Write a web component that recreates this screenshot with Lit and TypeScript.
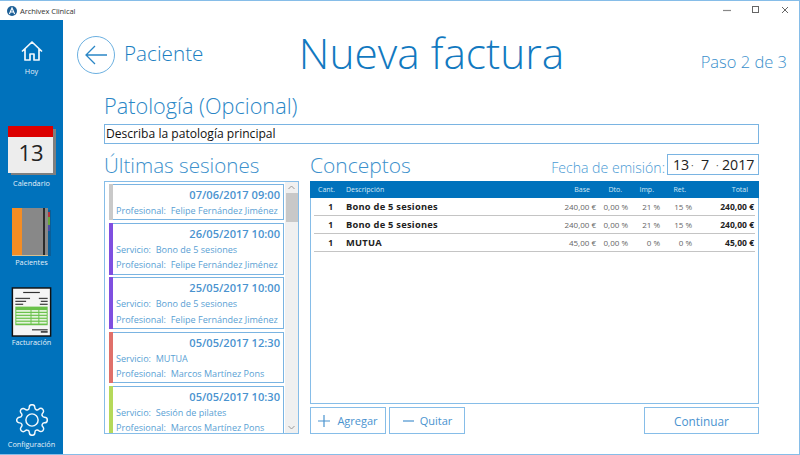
import { LitElement, html, css, svg } from "lit";
import { customElement } from "lit/decorators.js";

const sessions = [
  { c: "#c9c9c9", d: "07/06/2017 09:00", s: "", p: "Felipe Fernández Jiménez" },
  { c: "#7f4fe0", d: "26/05/2017 10:00", s: "Bono de 5 sesiones", p: "Felipe Fernández Jiménez" },
  { c: "#7f4fe0", d: "25/05/2017 10:00", s: "Bono de 5 sesiones", p: "Felipe Fernández Jiménez" },
  { c: "#e0706a", d: "05/05/2017 12:30", s: "MUTUA", p: "Marcos Martínez Pons" },
  { c: "#b5d95a", d: "05/05/2017 10:30", s: "Sesión de pilates", p: "Marcos Martínez Pons" },
];
const rows = [
  ["1", "Bono de 5 sesiones", "240,00 €", "0,00 %", "21 %", "15 %", "240,00 €"],
  ["1", "Bono de 5 sesiones", "240,00 €", "0,00 %", "21 %", "15 %", "240,00 €"],
  ["1", "MUTUA", "45,00 €", "0,00 %", "0 %", "0 %", "45,00 €"],
];

@customElement("app-root")
export class AppRoot extends LitElement {
  static styles = css`
    :host { display: block; width: 800px; height: 455px; box-sizing: border-box; overflow: hidden; background: #fff;
      border: 1px solid #86bde8; border-left: 0; font-family: "Open Sans", "Noto Sans", sans-serif; color: #0072bc; }
    * { box-sizing: border-box; }
    .titlebar { height: 19px; display: flex; align-items: center; padding-left: 7px; gap: 3px; font-size: 7.6px; letter-spacing: -0.1px; color: #333; }
    .winbtns { margin-left: auto; display: flex; }
    .winbtns svg { width: 30px; height: 19px; display: block; }
    .win { display: flex; height: 434px; }
    .side { width: 63px; flex: none; background: #0072bc; color: #e6f1f9; display: flex; flex-direction: column; align-items: center; font-size: 7.3px; }
    .nav { display: flex; flex-direction: column; align-items: center; }
    .nav svg { display: block; }
    .nav.home { padding-top: 21px; gap: 5px; }
    .nav.cal { padding-top: 50px; gap: 3px; }
    .nav.pac { padding-top: 20px; gap: 0; }
    .nav.fac { padding-top: 20px; gap: 0; }
    .nav.cfg { margin-top: auto; padding-bottom: 5px; gap: 3px; }
    .main { flex: 1; min-width: 0; display: flex; flex-direction: column; padding: 0 12px 0 14px; }
    .head { height: 64px; display: flex; align-items: center; position: relative; padding-top: 6px; }
    .back { width: 38px; height: 38px; display: block; }
    .crumb { font-size: 20.7px; font-weight: 300; margin-left: 9px; margin-bottom: 5px; color: #1b7fc2; }
    .title { position: absolute; left: 0; right: 1px; top: 2px; text-align: center; font-size: 42.4px; font-weight: 300; color: #1279c0; line-height: 62px; }
    .step { margin-left: auto; margin-top: 12px; font-size: 16.5px; font-weight: 300; color: #3a8fcb; }
    .body { padding: 0 28px 0 27px; flex: 1; display: flex; flex-direction: column; }
    .h2 { font-size: 21.7px; font-weight: 300; color: #2a86c6; line-height: 26px; margin-top: 9px; padding-bottom: 5px; white-space: nowrap; }
    .input { height: 20px; border: 1px solid #7ab4e2; font-size: 12.1px; color: #111; padding-left: 1px; line-height: 18px; white-space: nowrap; }
    .cols { display: flex; gap: 11px; margin-top: 7px; }
    .left { width: 195px; flex: none; display: flex; flex-direction: column; }
    .right { flex: 1; display: flex; flex-direction: column; min-width: 0; }
    .h3 { font-size: 20.6px; font-weight: 300; color: #3b90cc; line-height: 28px; height: 30px; white-space: nowrap; }
    .list { height: 253px; border: 1px solid #86bde8; display: flex; overflow: hidden; }
    .cards { flex: 1; padding: 2px 1px 0 4px; display: flex; flex-direction: column; gap: 2.67px; overflow: hidden; min-width: 0; }
    .card { flex: none; border: 1px solid #7ab4e2; padding: 0 3px 1px 6px; position: relative; font-size: 9.05px; color: #5a9fd4; line-height: 15.33px; background: #fff; }
    .stripe { position: absolute; left: -1px; top: -1px; bottom: -1px; width: 4px; }
    .date { text-align: right; font-size: 11.1px; font-weight: 600; color: #4a93cf; line-height: 16px; padding-top: 2px; }
    .card .l { height: 15.33px; white-space: nowrap; }
    .scroll { width: 13px; flex: none; background: #f0f0f0; display: flex; flex-direction: column; align-items: center; }
    .scroll svg { display: block; width: 13px; height: 11px; flex: none; }
    .thumb { width: 12px; height: 29px; background: #c8c8c8; }
    .sp { flex: 1; }
    .datebox { display: flex; align-items: flex-end; height: 30px; }
    .datebox .h3 { align-self: flex-start; font-size: 21px; }
    .fecha { margin-left: auto; font-size: 14.1px; font-weight: 300; color: #4a9ad4; line-height: 22px; margin-right: 2px; margin-bottom: 2px; white-space: nowrap; }
    .dinput { width: 92px; height: 21px; border: 1px solid #7ab4e2; font-size: 14.2px; color: #222; display: flex; align-items: center; padding-left: 5px; margin-bottom: 6px; }
    .dinput span { flex: none; white-space: nowrap; }
    .dinput .w1 { width: 18px; }
    .dinput .w2 { width: 10px; color: #555; font-size: 10px; }
    .dinput .w3 { width: 15px; }
    .dinput .w4 { width: 6px; color: #555; font-size: 10px; }
    .table { height: 223px; border: 1px solid #86bde8; border-top: 0; }
    .trow { display: grid; grid-template-columns: 25px 207px 50px 32px 32px 32px 62px; margin: 0 3px; align-items: center; }
    .thead { background: #0072bc; color: #d5e8f5; font-size: 7px; height: 17px; margin: 0 -1px; padding: 0 4px; white-space: nowrap; }
    .thead > div:first-child { padding-left: 4px; }
    .thead .r { text-align: right; padding-right: 6px; }
    .thead .d { padding-left: 7px; }
    .tb { height: 18px; border-bottom: 1px solid #c4c4c4; font-size: 8px; color: #666; white-space: nowrap; }
    .tb .r { text-align: right; }
    .tb .b { font-weight: 700; color: #222; font-size: 8.5px; }
    .tb .c { text-align: right; padding-right: 6px; }
    .tb .d { padding-left: 7px; font-size: 9.3px; letter-spacing: 0.25px; }
    .btns { display: flex; margin-top: 3px; gap: 3px; height: 27px; }
    .btn { border: 1px solid #86bde8; height: 27px; display: flex; align-items: center; justify-content: center; font-size: 11px; color: #4a93cf; gap: 5px; width: 76px; }
    .btn svg { display: block; }
    .btn.cont { margin-left: auto; width: 115px; font-size: 11.8px; }
  `;

  render() {
    return html`
      <div class="titlebar">
        <svg width="10" height="10" viewBox="0 0 10 10"><circle cx="5" cy="5" r="5" fill="#1d5f96"/><path d="M2.4 8L5 2l2.6 6M3.5 6h3" fill="none" stroke="#fff" stroke-width="1.1"/></svg>
        <span>Archivex Clinical</span>
        <div class="winbtns">
          <svg viewBox="0 0 30 19"><path d="M14 9.5h8" stroke="#888" stroke-width="1.2"/></svg>
          <svg viewBox="0 0 30 19"><rect x="13.5" y="5.5" width="6" height="6" fill="none" stroke="#666"/></svg>
          <svg viewBox="0 0 30 19"><path d="M13 6l6 6M19 6l-6 6" stroke="#666"/></svg>
        </div>
      </div>
      <div class="win">
        <div class="side">
          <div class="nav home">
            <svg width="22" height="20" viewBox="0 0 22 20" fill="none" stroke="#f2f8fc" stroke-width="1.7" stroke-linejoin="round"><path d="M1 10.5L11 1l10 9.5M4 8v11h5v-6h4v6h5V8"/></svg>
            <span>Hoy</span>
          </div>
          <div class="nav cal">
            <svg width="48" height="49" viewBox="0 0 48 49">
              <rect x="3" y="3" width="45" height="46" fill="#7f7f7f"/>
              <rect x="0" y="0" width="45" height="47" fill="#ededed"/>
              <rect x="0" y="0" width="45" height="11" fill="#dc0000"/>
              <text x="23" y="35" text-anchor="middle" font-family="Open Sans, sans-serif" font-size="22" fill="#222">13</text>
            </svg>
            <span>Calendario</span>
          </div>
          <div class="nav pac">
            <svg width="39" height="49" viewBox="0 0 39 49">
              <rect x="35" y="2" width="4" height="46" fill="#0a5e98"/>
              <rect x="36" y="4" width="2" height="5" fill="#b8323a"/><rect x="36" y="9" width="2" height="8" fill="#6aa83a"/><rect x="36" y="17" width="2" height="6" fill="#4a4aa8"/>
              <rect x="0" y="0" width="36" height="48" fill="#888"/>
              <rect x="0" y="0" width="10" height="48" fill="#f58d24"/>
              <rect x="31" y="0" width="2" height="48" fill="#2b2b2b"/>
              <rect x="0" y="47" width="36" height="1" fill="#d8c090"/>
            </svg>
            <span>Pacientes</span>
          </div>
          <div class="nav fac">
            <svg width="41" height="50" viewBox="0 0 41 51">
              <rect x="1" y="1" width="39" height="49" fill="#f5f5f5" stroke="#111" stroke-width="1.5"/>
              <rect x="12" y="5" width="17" height="1.2" fill="#333"/>
              <rect x="4" y="11" width="15" height="1.3" fill="#444"/><rect x="4" y="14" width="11" height="1.3" fill="#444"/><rect x="4" y="17" width="8" height="1.3" fill="#444"/>
              <rect x="28" y="11" width="9" height="1.3" fill="#444"/><rect x="30" y="14" width="7" height="1.3" fill="#444"/><rect x="29" y="17" width="8" height="1.3" fill="#444"/>
              <rect x="4" y="20" width="33" height="19" fill="#69c14a"/>
              ${[23.5, 26.5, 29.5, 32.5, 35.5].map((y) => svg`<rect x="5" y="${y}" width="14.5" height="1.8" fill="#e4f3dc"/><rect x="20.5" y="${y}" width="7" height="1.8" fill="#e4f3dc"/><rect x="28.5" y="${y}" width="7.5" height="1.8" fill="#e4f3dc"/>`)}
              <rect x="21" y="43" width="16" height="1.3" fill="#444"/><rect x="30" y="45" width="7" height="1.6" fill="#333"/>
            </svg>
            <span>Facturación</span>
          </div>
          <div class="nav cfg">
            <svg width="32" height="32" viewBox="0.5 0.5 23 23" fill="none" stroke="#f2f8fc" stroke-width="1.05" stroke-linejoin="round"><circle cx="12" cy="12" r="4.4"/><path d="M19.4 15a1.65 1.65 0 0 0 .33 1.82l.06.06a2 2 0 0 1 0 2.83 2 2 0 0 1-2.83 0l-.06-.06a1.65 1.65 0 0 0-1.82-.33 1.65 1.65 0 0 0-1 1.51V21a2 2 0 0 1-2 2 2 2 0 0 1-2-2v-.09A1.65 1.65 0 0 0 9 19.4a1.65 1.65 0 0 0-1.82.33l-.06.06a2 2 0 0 1-2.83 0 2 2 0 0 1 0-2.83l.06-.06a1.65 1.65 0 0 0 .33-1.82 1.65 1.65 0 0 0-1.51-1H3a2 2 0 0 1-2-2 2 2 0 0 1 2-2h.09A1.65 1.65 0 0 0 4.6 9a1.65 1.65 0 0 0-.33-1.82l-.06-.06a2 2 0 0 1 0-2.83 2 2 0 0 1 2.83 0l.06.06a1.65 1.65 0 0 0 1.82.33H9a1.65 1.65 0 0 0 1-1.51V3a2 2 0 0 1 2-2 2 2 0 0 1 2 2v.09a1.65 1.65 0 0 0 1 1.51 1.65 1.65 0 0 0 1.82-.33l.06-.06a2 2 0 0 1 2.83 0 2 2 0 0 1 0 2.83l-.06.06a1.65 1.65 0 0 0-.33 1.82V9a1.65 1.65 0 0 0 1.51 1H21a2 2 0 0 1 2 2 2 2 0 0 1-2 2h-.09a1.65 1.65 0 0 0-1.51 1z"/></svg>
            <span>Configuración</span>
          </div>
        </div>
        <div class="main">
          <div class="head">
            <svg class="back" viewBox="0 0 38 38" fill="none"><circle cx="19" cy="19" r="18.5" stroke="#6cb0e0"/><path d="M30 19H9M18 10l-9 9 9 9" stroke="#2a86c6" stroke-width="1.3"/></svg>
            <span class="crumb">Paciente</span>
            <div class="title">Nueva factura</div>
            <span class="step">Paso 2 de 3</span>
          </div>
          <div class="body">
            <div class="h2">Patología (Opcional)</div>
            <div class="input">Describa la patología principal</div>
            <div class="cols">
              <div class="left">
                <div class="h3">Últimas sesiones</div>
                <div class="list">
                  <div class="cards">
                    ${sessions.map((s) => html`
                      <div class="card">
                        <div class="stripe" style="background:${s.c}"></div>
                        <div class="date">${s.d}</div>
                        ${s.s ? html`<div class="l">Servicio:&nbsp; ${s.s}</div>` : ""}
                        <div class="l">Profesional:&nbsp; ${s.p}</div>
                      </div>`)}
                  </div>
                  <div class="scroll">
                    <svg viewBox="0 0 13 11"><path d="M3.5 7l3-3 3 3" fill="none" stroke="#999"/></svg>
                    <div class="thumb"></div>
                    <div class="sp"></div>
                    <svg viewBox="0 0 13 11"><path d="M3.5 4l3 3 3-3" fill="none" stroke="#999"/></svg>
                  </div>
                </div>
              </div>
              <div class="right">
                <div class="datebox">
                  <div class="h3">Conceptos</div>
                  <span class="fecha">Fecha de emisión:</span>
                  <div class="dinput"><span class="w1">13</span><span class="w2">·</span><span class="w3">7</span><span class="w4">·</span><span>2017</span></div>
                </div>
                <div class="table">
                  <div class="trow thead">
                    <div>Cant.</div><div class="d">Descripción</div>
                    <div class="r">Base</div><div class="r">Dto.</div><div class="r">Imp.</div><div class="r">Ret.</div><div class="r">Total</div>
                  </div>
                  ${rows.map((r) => html`
                    <div class="trow tb">
                      <div class="b c">${r[0]}</div><div class="b d">${r[1]}</div>
                      <div class="r">${r[2]}</div><div class="r">${r[3]}</div><div class="r">${r[4]}</div><div class="r">${r[5]}</div>
                      <div class="r b">${r[6]}</div>
                    </div>`)}
                </div>
                <div class="btns">
                  <div class="btn"><svg width="14" height="14" viewBox="0 0 14 14"><path d="M6 1v12M0 7h12" stroke="#4a93cf" stroke-width="1.2"/></svg>Agregar</div>
                  <div class="btn"><svg width="13" height="14" viewBox="0 0 13 14"><path d="M1 7h11" stroke="#4a93cf" stroke-width="1.2"/></svg>Quitar</div>
                  <div class="btn cont">Continuar</div>
                </div>
              </div>
            </div>
          </div>
        </div>
      </div>
    `;
  }
}
